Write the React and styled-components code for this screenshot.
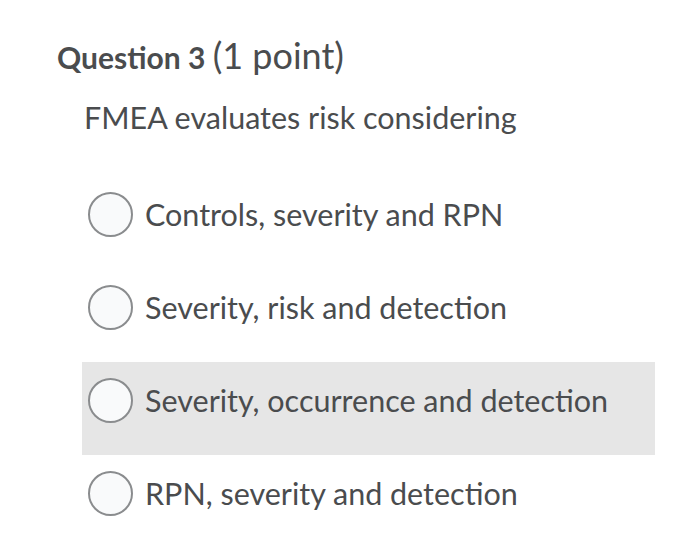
import styled, { createGlobalStyle } from "styled-components"

const Global = createGlobalStyle`
  body {
    margin: 0;
    background: #fff;
    font-family: Lato, "Open Sans", sans-serif;
    color: #4a4c4e;
  }
`

const Page = styled.div`
  width: 700px;
  height: 551px;
  padding: 32px 45px 0 57px;
  box-sizing: border-box;
`

const Heading = styled.h2`
  margin: 0;
  font-size: 30px;
  font-weight: 700;
  line-height: 46px;
  span {
    font-weight: 400;
    font-size: 36px;
  }
`

const Prompt = styled.p`
  margin: 15px 0 0 27px;
  font-size: 30.5px;
  line-height: 44px;
`

const Options = styled.div`
  margin: 37px 0 0 25px;
  display: flex;
  flex-direction: column;
`

const Option = styled.label`
  display: flex;
  align-items: center;
  gap: 12px;
  height: 93px;
  padding: 0 0 17px 6px;
  box-sizing: border-box;
  font-size: 30.5px;
  background: ${p => (p.$hover ? "#e6e6e6" : "transparent")};
`

const Radio = styled.span`
  width: 45px;
  height: 45px;
  border-radius: 50%;
  border: 2px solid #8a8c8e;
  background: #f9fafb;
  box-sizing: border-box;
  flex-shrink: 0;
`

const choices = [
  "Controls, severity and RPN",
  "Severity, risk and detection",
  "Severity, occurrence and detection",
  "RPN, severity and detection",
]

export default function App() {
  return (
    <Page>
      <Global />
      <Heading>
        Question 3 <span>(1 point)</span>
      </Heading>
      <Prompt>FMEA evaluates risk considering</Prompt>
      <Options>
        {choices.map((c, i) => (
          <Option key={c} $hover={i === 2}>
            <Radio />
            {c}
          </Option>
        ))}
      </Options>
    </Page>
  )
}
